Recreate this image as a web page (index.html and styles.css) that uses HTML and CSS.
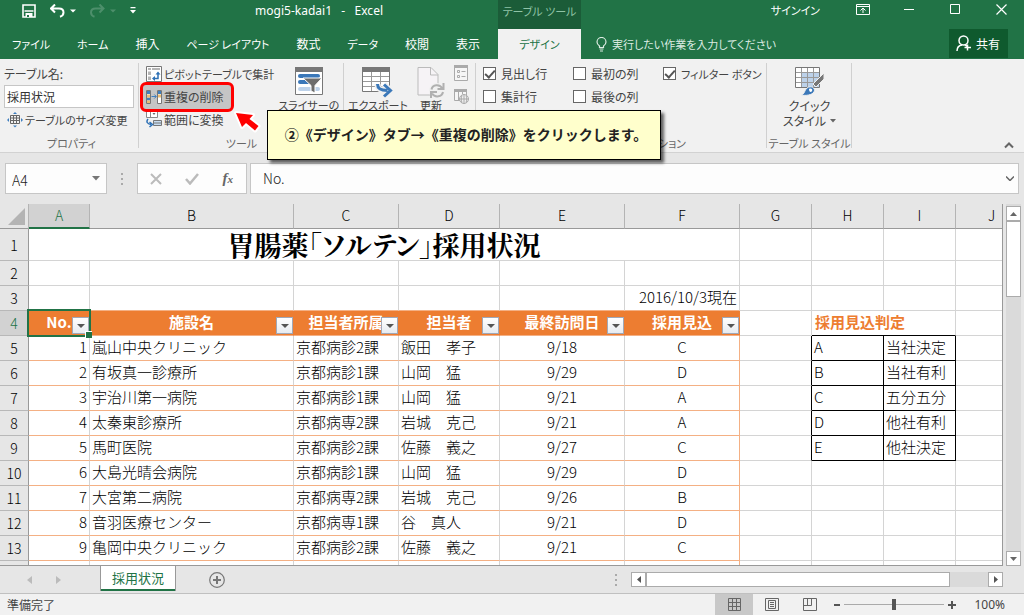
FILE: index.html
```html
<!DOCTYPE html>
<html lang="ja">
<head>
<meta charset="utf-8">
<title>mogi5-kadai1 - Excel</title>
<link rel="stylesheet" href="styles.css">
</head>
<body>
<div class="app">
  <header class="top">
    <div class="titlebar">
      <button class="qat" aria-label="上書き保存"><svg width="14" height="14" viewBox="0 0 14 14"><path d="M1 1h12v12H1z" fill="none" stroke="#fff" stroke-width="1.6"/><path d="M2.500 7h9" stroke="#fff" stroke-width="1.500"/><path d="M3.500 9h7v4h-7z" fill="#fff"/><path d="M5 11h2v2H5z" fill="#217346"/></svg></button>
      <button class="qat" aria-label="元に戻す"><svg width="26" height="14" viewBox="0 0 26 14"><path d="M5 0.500 1 4.500l4 4M1.500 4.500H9c3 0 4.500 1.500 4.500 4 0 2-1.300 3.500-3.500 4.300" fill="none" stroke="#fff" stroke-width="2"/><path d="M20 5.500h6l-3 3z" fill="#fff"/></svg></button>
      <button class="qat dim" aria-label="やり直し"><svg width="26" height="14" viewBox="0 0 26 14"><path d="M9.500 0.500l4 4-4 4M13 4.500H5.500C2.500 4.500 1 6 1 8.500c0 2 1.300 3.500 3.500 4.300" fill="none" stroke="#4d8f6b" stroke-width="2"/><path d="M20 5.500h6l-3 3z" fill="#4d8f6b"/></svg></button>
      <button class="qat" aria-label="カスタマイズ"><svg width="6" height="7" viewBox="0 0 6 7"><path d="M0.500 0h5v1.300h-5zM0 3h6L3 6.500z" fill="#fff"/></svg></button>
      <h1 class="doc">mogi5-kadai1&nbsp;&nbsp; -&nbsp;&nbsp; Excel</h1>
    </div>
    <div class="context">テーブル ツール</div>
    <div class="winbar">
      <button class="signin">サインイン</button>
      <button class="win" aria-label="リボンの表示オプション"><svg width="14" height="11" viewBox="0 0 14 11"><path d="M.5.5h13v10H.5zM.5 2.500h13M7 9V4.500M4.500 6.500 7 4l2.500 2.500" fill="none" stroke="#fff"/></svg></button>
      <button class="win" aria-label="最小化"><svg width="10" height="11" viewBox="0 0 10 11"><path d="M0 5.500h10" stroke="#fff"/></svg></button>
      <button class="win" aria-label="最大化"><svg width="10" height="11" viewBox="0 0 10 11"><path d="M.5.5h9v9h-9z" fill="none" stroke="#fff"/></svg></button>
      <button class="win" aria-label="閉じる"><svg width="11" height="11" viewBox="0 0 11 11"><path d="M.5.5l10 10M10.500.5l-10 10" stroke="#fff" stroke-width="1.200"/></svg></button>
    </div>
    <nav class="tabs">
      <a class="small" href="#">ファイル</a><a class="small" href="#">ホーム</a><a href="#">挿入</a><a class="small" href="#">ページ レイアウト</a><a href="#">数式</a><a class="small" href="#">データ</a><a href="#">校閲</a><a href="#">表示</a>
    </nav>
    <a class="tab-on small" href="#">デザイン</a>
    <div class="tellme">
      <svg width="11" height="15" viewBox="0 0 11 15"><path d="M3.500 10.500V9C2 8 1 6.800 1 5a4.500 4.500 0 0 1 9 0c0 1.800-1 3-2.500 4v1.500zM3.500 12h4M4 14h3" fill="none" stroke="#dcebe2" stroke-width="1.200"/></svg>
      <button class="ask">実行したい作業を入力してください</button>
      <button class="share"><svg width="16" height="17" viewBox="0 0 16 17"><circle cx="7.500" cy="5.500" r="4.500" fill="none" stroke="#fff" stroke-width="1.500"/><path d="M1 16c0-3.500 1.700-5.500 5-6M9 10l2 1M11.500 9.500v6M8.500 12.500h6.500" fill="none" stroke="#fff" stroke-width="1.500"/></svg>共有</button>
    </div>
  </header>

  <section class="ribbon">
    <div class="group g-prop">
      <div class="rows">
        <label class="cap" for="tname">テーブル名:</label>
        <input class="tname" id="tname" value="採用状況">
        <button class="cmd small"><svg width="16" height="16" viewBox="0 0 16 16"><path d="M3.500 3.500h9v8h-9zM3.500 6h9M3.500 8.500h9M6.500 3.500v8M9.500 3.500v8" fill="none" stroke="#666"/><path d="M6 2l2-2 2 2zM6 13.500l2 2 2-2zM2 6 0 8l2 2zM14 6l2 2-2 2z" fill="#3f7fbf"/></svg>テーブルのサイズ変更</button>
      </div>
      <div class="gname">プロパティ</div>
    </div>
    <div class="group g-tool">
      <div class="body">
        <div class="rows">
          <button class="cmd small"><svg width="16" height="16" viewBox="0 0 16 16"><path d="M.5.5h15v15H.5z" fill="#fff" stroke="#777"/><path d="M2 2h3v2H2zM6 2h8v2H6zM2 5.500h3V9H2zM2 10.500h3V14H2z" fill="#b5b5b5"/><path d="M7.500 12.500H12V7.500" fill="none" stroke="#2d70b5" stroke-width="1.500"/><path d="M9 10v5l-3-2.500zM9.500 8.500h5L12 5.500z" fill="#2d70b5"/></svg>ピボットテーブルで集計</button>
          <button class="cmd hot"><svg width="16" height="16" viewBox="0 0 16 16"><path d="M.5 1.500h4v13h-4zM11.500 1.500h4v13h-4z" fill="#fff" stroke="#777"/><path d="M1 2h3v3H1zM1 8.500h3v3H1zM12 2h3v3h-3z" fill="#3f7fbf"/><path d="M1 5.500h3v3H1zM1 11.500h3V14H1zM12 5.500h3v3h-3z" fill="#edbd73"/><path d="M5.500 7.500H10M8.300 5.500l2 2-2 2" fill="none" stroke="#3f7fbf"/></svg>重複の削除</button>
          <button class="cmd"><svg width="16" height="16" viewBox="0 0 16 16"><path d="M.5 0v5.500h11V0M4.500 0v5.500" fill="#fff" stroke="#888"/><path d="M6.500 1h3L8 3z" fill="#666"/><path d="M7.500 8.500h8v5h-8z" fill="#c8ddf1" stroke="#777"/><path d="M8 11h7" stroke="#777"/><path d="M2 7C0 9.500 1 12 5 12.500M3.500 10l3 2.500-3 2.500" fill="none" stroke="#2d70b5" stroke-width="1.500"/></svg>範囲に変換</button>
        </div>
        <button class="big"><svg width="28" height="28" viewBox="0 0 28 28"><path d="M.5.5h27v27H.5z" fill="#fff" stroke="#777"/><path d="M0 0h28v5H0z" fill="#777"/><rect x="3" y="7" width="22" height="4" rx="2" fill="#3b78b9"/><rect x="3" y="13" width="16" height="4" rx="2" fill="#3b78b9"/><rect x="3" y="20" width="22" height="4" rx="2" fill="#bdd2ea"/><path d="M8 11h19l-7 7.500V26l-4-2v-5.500z" fill="#6d6d6d" stroke="#fff"/></svg>スライサーの</button>
      </div>
      <div class="gname">ツール</div>
    </div>
    <div class="group g-ext">
      <div class="body">
        <button class="big"><svg width="31" height="31" viewBox="0 0 31 31"><path d="M.5.5h27v24H.5z" fill="#fff" stroke="#777"/><path d="M0 0h28v5H0z" fill="#777"/><path d="M1 9.500h26M1 14.500h26M1 19.500h26M9.500 5v19M18.500 5v19" stroke="#999"/><path d="M15.500 17c0 5 3 6.500 10 6.500M22 17.500l6.500 6-6.500 6" fill="none" stroke="#f0f0f0" stroke-width="6"/><path d="M15.500 17c0 5 3 6.500 10 6.500M22 17.500l6.500 6-6.500 6" fill="none" stroke="#3b78b9" stroke-width="3"/></svg>エクスポート</button>
        <button class="big"><svg width="28" height="31" viewBox="0 0 28 31"><path d="M1 .5h13l7 7v20.500H1z" fill="#f6f3f6" stroke="#bbb"/><path d="M13.500.5v7.500H21" fill="none" stroke="#bbb"/><circle cx="20" cy="24" r="8" fill="#f0f0f0"/><path d="M14.500 22.500c1-5 8-6 11-1M26.500 16v6h-6M26 25c-1 5-8 6-11 1.500M14 31v-6h6" fill="none" stroke="#b0b0b0" stroke-width="2"/></svg>更新</button>
        <div class="mini">
          <button class="mi" aria-label="プロパティ"><svg width="14" height="16" viewBox="0 0 14 16"><path d="M.5.5h13v15H.5z" fill="#f6f6f6" stroke="#aaa"/><path d="M0 0h14v3H0z" fill="#aaa"/><path d="M3.500 5.500h2v2h-2zM3.500 10.500h2v2h-2zM7.500 6.500h4M7.500 11.500h4" fill="none" stroke="#aaa"/></svg></button>
          <button class="mi" aria-label="ブラウザーで開く"><svg width="15" height="15" viewBox="0 0 15 15"><path d="M.5 1.500h12v10H.5zM4.500 1v10M8.500 1v4" fill="#f6f6f6" stroke="#aaa"/><path d="M0 0h13v3H0z" fill="#aaa"/><circle cx="10" cy="10" r="4.500" fill="#f0f0f0" stroke="#aaa"/><path d="M5.500 10h9M10 5.500v9M8 6.500c-1 2-1 5 0 7M12 6.500c1 2 1 5 0 7" fill="none" stroke="#aaa"/></svg></button>
        </div>
      </div>
    </div>
    <div class="group g-opt">
      <div class="checks">
        <label><input type="checkbox" checked>見出し行</label>
        <label><input type="checkbox">最初の列</label>
        <label class="small"><input type="checkbox" checked>フィルター ボタン</label>
        <label><input type="checkbox">集計行</label>
        <label><input type="checkbox">最後の列</label>
      </div>
      <div class="gname">テーブル スタイルのオプション</div>
    </div>
    <div class="group g-sty">
      <div class="body">
        <button class="big"><svg width="30" height="29" viewBox="0 0 30 29"><path d="M.5.5h24v20H.5z" fill="#fff" stroke="#777"/><path d="M7 6h17v14H7z" fill="#bdd2ea"/><path d="M1 5.500h23M1 10.500h23M1 15.500h23M6.500 1v19M12.500 1v19M18.500 1v19" stroke="#999"/><path d="M29 6v6l-8 8-3-3z" fill="#777" stroke="#f0f0f0"/><path d="M6 28c4-1 3-4 6-7 4-3 9 0 7 4-2 3-8 4-13 3z" fill="#3b78b9" stroke="#f0f0f0"/><path d="M14 22c2-1 4 0 3 2s-3 1-3-2z" fill="#fff"/></svg>クイック<br>スタイル<svg class="caret" width="6" height="4" viewBox="0 0 6 4"><path d="M0 0h6L3 3.500z" fill="#666"/></svg></button>
      </div>
      <div class="gname">テーブル スタイル</div>
    </div>
    <button class="fold" aria-label="リボンを折りたたむ"><svg width="10" height="7" viewBox="0 0 10 7"><path d="M1 5.500l4-4 4 4" fill="none" stroke="#666" stroke-width="2"/></svg></button>
  </section>

  <section class="fbar">
    <div class="namebox"><input aria-label="名前ボックス" value="A4"><svg width="8" height="5" viewBox="0 0 8 5"><path d="M0 0h8L4 4.500z" fill="#777"/></svg></div>
    <div class="grip"><i></i><i></i><i></i></div>
    <div class="fbtns">
      <button aria-label="キャンセル"><svg width="12" height="12" viewBox="0 0 12 12"><path d="M1 1l10 10M11 1 1 11" stroke="#bbb" stroke-width="2"/></svg></button>
      <button aria-label="入力"><svg width="14" height="12" viewBox="0 0 14 12"><path d="M1 6l4 4.500L13 1" fill="none" stroke="#bbb" stroke-width="2.500"/></svg></button>
      <button class="fx" aria-label="関数の挿入">f<small>x</small></button>
    </div>
    <div class="formula"><input aria-label="数式バー" value="No."><svg width="8" height="5" viewBox="0 0 8 5"><path d="M0 .5l4 4 4-4" fill="none" stroke="#666" stroke-width="1.500"/></svg></div>
  </section>

  <main class="work">
    <div class="sheet">
      <table>
        <colgroup><col class="w0"><col class="wa"><col class="wb"><col class="wc"><col class="wd"><col class="we"><col class="wf"><col class="wg"><col class="wg"><col class="wg"><col class="wg"></colgroup>
        <thead><tr><th class="corner"><svg width="17" height="17" viewBox="0 0 17 17"><path d="M17 0v17H0z" fill="#b4b4b4"/></svg></th><th class="sel">A</th><th>B</th><th>C</th><th>D</th><th>E</th><th>F</th><th>G</th><th>H</th><th>I</th><th>J</th></tr></thead>
        <tbody>
          <tr class="r1"><th>1</th><td class="heading" colspan="6">胃腸薬「ソルテン」採用状況</td><td></td><td></td><td></td><td></td></tr>
          <tr><th>2</th><td></td><td></td><td></td><td></td><td></td><td></td><td></td><td></td><td></td><td></td></tr>
          <tr class="r3"><th>3</th><td></td><td></td><td></td><td></td><td></td><td class="num">2016/10/3現在</td><td></td><td></td><td></td><td></td></tr>
          <tr class="r4"><th class="sel">4</th><td class="h cur">No.<button aria-label="No.を絞り込む"></button></td><td class="h">施設名<button aria-label="施設名を絞り込む"></button></td><td class="h">担当者所属<button aria-label="担当者所属を絞り込む"></button></td><td class="h">担当者<button aria-label="担当者を絞り込む"></button></td><td class="h">最終訪問日<button aria-label="最終訪問日を絞り込む"></button></td><td class="h">採用見込<button aria-label="採用見込を絞り込む"></button></td><td></td><td class="judge" colspan="2">採用見込判定</td><td></td></tr>
          <tr class="d k"><th>5</th><td>1</td><td>嵐山中央クリニック</td><td>京都病診2課</td><td>飯田　孝子</td><td>9/18</td><td>C</td><td></td><td>A</td><td>当社決定</td><td></td></tr>
          <tr class="d k"><th>6</th><td>2</td><td>有坂真一診療所</td><td>京都病診1課</td><td>山岡　猛</td><td>9/29</td><td>D</td><td></td><td>B</td><td>当社有利</td><td></td></tr>
          <tr class="d k"><th>7</th><td>3</td><td>宇治川第一病院</td><td>京都病診1課</td><td>山岡　猛</td><td>9/21</td><td>A</td><td></td><td>C</td><td>五分五分</td><td></td></tr>
          <tr class="d k"><th>8</th><td>4</td><td>太秦東診療所</td><td>京都病専2課</td><td>岩城　克己</td><td>9/21</td><td>A</td><td></td><td>D</td><td>他社有利</td><td></td></tr>
          <tr class="d k"><th>9</th><td>5</td><td>馬町医院</td><td>京都病診2課</td><td>佐藤　義之</td><td>9/27</td><td>C</td><td></td><td>E</td><td>他社決定</td><td></td></tr>
          <tr class="d"><th>10</th><td>6</td><td>大島光晴会病院</td><td>京都病診1課</td><td>山岡　猛</td><td>9/29</td><td>D</td><td></td><td></td><td></td><td></td></tr>
          <tr class="d"><th>11</th><td>7</td><td>大宮第二病院</td><td>京都病専2課</td><td>岩城　克己</td><td>9/26</td><td>B</td><td></td><td></td><td></td><td></td></tr>
          <tr class="d"><th>12</th><td>8</td><td>音羽医療センター</td><td>京都病専1課</td><td>谷　真人</td><td>9/21</td><td>D</td><td></td><td></td><td></td><td></td></tr>
          <tr class="d"><th>13</th><td>9</td><td>亀岡中央クリニック</td><td>京都病診2課</td><td>佐藤　義之</td><td>9/21</td><td>C</td><td></td><td></td><td></td><td></td></tr>
          <tr class="d"><th></th><td></td><td></td><td></td><td></td><td></td><td></td><td></td><td></td><td></td><td></td></tr>
        </tbody>
      </table>
    </div>
    <div class="vscroll">
      <button aria-label="上へ"><svg width="7" height="4" viewBox="0 0 7 4"><path d="M0 4h7L3.500 0z" fill="#666"/></svg></button>
      <div class="vthumb"></div>
      <button class="end" aria-label="下へ"><svg width="7" height="4" viewBox="0 0 7 4"><path d="M0 0h7L3.500 4z" fill="#666"/></svg></button>
    </div>
  </main>

  <div class="sheets">
    <div class="nav">
      <button aria-label="前のシート"><svg width="5" height="8" viewBox="0 0 5 8"><path d="M5 0v8L0 4z" fill="#bbb"/></svg></button>
      <button aria-label="次のシート"><svg width="5" height="8" viewBox="0 0 5 8"><path d="M0 0v8l5-4z" fill="#bbb"/></svg></button>
    </div>
    <a class="stab" href="#">採用状況</a>
    <button class="add" aria-label="新しいシート"><svg width="16" height="16" viewBox="0 0 16 16"><circle cx="8" cy="8" r="7.300" fill="none" stroke="#777" stroke-width="1.200"/><path d="M8 4v8M4 8h8" stroke="#777" stroke-width="2"/></svg></button>
    <div class="grip"><i></i><i></i><i></i></div>
    <div class="hscroll">
      <button aria-label="左へ"><svg width="4" height="7" viewBox="0 0 4 7"><path d="M4 0v7L0 3.500z" fill="#555"/></svg></button>
      <div class="hthumb"></div>
      <button class="end" aria-label="右へ"><svg width="4" height="7" viewBox="0 0 4 7"><path d="M0 0v7l4-3.500z" fill="#555"/></svg></button>
    </div>
  </div>

  <footer class="status">
    <span class="ready">準備完了</span>
    <button class="view on" aria-label="標準"><svg width="13" height="13" viewBox="0 0 13 13"><path d="M.5.5h12v12H.5zM.5 4.500h12M.5 8.500h12M4.500.5v12M8.500.5v12" fill="none" stroke="#666"/></svg></button>
    <button class="view" aria-label="ページ レイアウト表示"><svg width="14" height="13" viewBox="0 0 14 13"><path d="M.5.5h13v12H.5zM3.500 2.500h7v8h-7zM5 4.500h4M5 6.500h4M5 8.500h4" fill="none" stroke="#666"/></svg></button>
    <button class="view" aria-label="改ページ プレビュー"><svg width="14" height="13" viewBox="0 0 14 13"><path d="M.5.5h13v12H.5zM.5 7.500h8V.5M4.500.5v7" fill="none" stroke="#666"/></svg></button>
    <button class="zb" aria-label="縮小"><svg width="6" height="8" viewBox="0 0 6 8"><path d="M0 4h6" stroke="#555" stroke-width="2"/></svg></button>
    <input class="zoom" type="range" aria-label="ズーム" value="50">
    <button class="zb" aria-label="拡大"><svg width="8" height="8" viewBox="0 0 8 8"><path d="M0 4h8M4 0v8" stroke="#555" stroke-width="2"/></svg></button>
    <button class="pct">100%</button>
  </footer>

  <svg class="pointer" width="24" height="19" viewBox="0 0 24 19"><path d="M1 1l17 2-3.500 4 9 7-3.500 4.500-9-7.500L7 15z" fill="#f00" stroke="#fff" stroke-width="4" stroke-linejoin="round" paint-order="stroke"/></svg>
  <div class="callout">②《デザイン》タブ→《重複の削除》をクリックします。</div>
</div>
</body>
</html>
```

FILE: styles.css
```css
* { box-sizing: border-box; }
body {
  margin: 0;
  font-family: "Noto Sans CJK JP", sans-serif;
  font-size: 12px;
  line-height: 16px;
  color: #444;
  font-feature-settings: "palt";
}
button, input {
  font: inherit;
  font-feature-settings: inherit;
  color: inherit;
  background: none;
  border: 0;
  padding: 0;
  margin: 0;
  min-width: 0;
}
a { color: inherit; text-decoration: none; }
svg { flex: none; display: block; }
.app {
  position: relative;
  display: flex;
  flex-direction: column;
  height: 100vh;
  background: #e6e6e6;
  overflow: hidden;
}
.small, .big, .gname, .ask, .signin, .context { font-size: 11px; }

/* title bar and tabs */
.top {
  flex: none;
  display: grid;
  grid-template-columns: 498px 83px 1fr;
  grid-template-rows: 29px 30px;
  background: #217346;
  color: #fff;
}
.titlebar { display: flex; align-items: center; gap: 14px; padding: 0 115px 8px 22px; }
.qat { height: 16px; }
.doc {
  margin: 0 0 0 auto;
  font: 12px/16px "Noto Sans", "Noto Sans CJK JP", sans-serif;
}
.context {
  display: flex;
  justify-content: center;
  padding-top: 3px;
  background: #1b5c38;
  color: #8fc3a6;
}
.winbar { display: flex; align-items: center; justify-content: flex-end; padding-bottom: 10px; }
.signin { margin-right: 20px; }
.win { width: 46px; height: 18px; display: flex; align-items: center; justify-content: center; }
.tabs { display: flex; justify-content: space-between; align-items: center; padding: 0 18px 0 12px; }
.tab-on {
  display: flex;
  align-items: center;
  justify-content: center;
  background: #f1f1f1;
  color: #217346;
}
.tellme { display: flex; align-items: center; gap: 5px; padding: 0 16px 0 15px; color: #dcebe2; }
.share {
  margin-left: auto;
  align-self: flex-start;
  display: flex;
  align-items: center;
  gap: 4px;
  height: 29px;
  padding: 0 8px 0 7px;
  background: #0f5a2e;
  color: #fff;
}

/* ribbon */
.ribbon {
  flex: none;
  display: flex;
  height: 94px;
  padding: 3px 0 1px;
  background: #f1f1f1;
  border-bottom: 1px solid #d2d2d2;
}
.group { display: flex; flex-direction: column; justify-content: space-between; position: relative; flex: none; }
.group::after {
  content: "";
  position: absolute;
  right: 0;
  top: 1px;
  bottom: 3px;
  border-right: 1px solid #d0d0d0;
}
.g-prop { width: 139px; padding-left: 4px; }
.g-tool { width: 205px; }
.g-ext { width: 132px; }
.g-opt { width: 291px; }
.g-opt .gname { padding-right: 12px; }
.g-sty { width: 85px; }
.gname { text-align: center; color: #666; white-space: nowrap; }
.rows { display: grid; grid-template-rows: repeat(3, 23px); align-items: center; justify-items: start; }
.cap, .cmd { white-space: nowrap; }
.tname { width: 130px; height: 23px; border: 1px solid #c6c6c6; background: #fff; padding: 0 2px; color: #333; }
.cmd { display: flex; align-items: center; gap: 2px; padding: 0 3px; height: 22px; }
.g-tool .cmd { padding: 0 0 0 7px; }
.g-tool .cmd.hot {
  position: relative;
  z-index: 1;
  height: 30px;
  margin-left: 1px;
  padding: 0 7px 0 3px;
  border: 3px solid #f00;
  border-radius: 6px;
  background: #c5c5c5;
}
.body { display: flex; align-items: flex-start; height: 69px; }
.g-tool .body { gap: 4px; }
.big {
  flex: none;
  display: block;
  padding-top: 5px;
  text-align: center;
  line-height: 15px;
}
.big > svg:first-child { margin: 0 auto 3px; }
.g-ext .body { padding-left: 4px; gap: 9px; }
.g-ext .big > svg:first-child { margin-bottom: 0; }
.mini { display: grid; gap: 7px; align-content: start; padding-top: 3px; }
.mi { height: 16px; }
.g-sty .body { justify-content: center; }
.g-sty .big { font-size: 12px; }
.g-sty .big > svg:first-child { margin-bottom: 2px; }
.caret { display: inline-block; margin: 0 0 3px 4px; }
.checks { display: grid; grid-template-columns: 90px 90px 1fr; grid-auto-rows: 23px; padding-left: 7px; }
.checks label { display: flex; align-items: center; gap: 5px; white-space: nowrap; }
.checks input {
  appearance: none;
  width: 13px;
  height: 13px;
  border: 1px solid #666;
  background: #fff;
  display: grid;
  place-items: center;
}
.checks input:checked::after {
  content: "";
  width: 4px;
  height: 8px;
  border: solid #555;
  border-width: 0 2px 2px 0;
  transform: rotate(42deg);
  margin-bottom: 2px;
}
.fold { margin: auto 10px 2px auto; }

/* formula bar */
.fbar { flex: none; display: flex; height: 51px; padding: 10px 5px 10px; }
.namebox, .fbtns, .formula { display: flex; align-items: center; background: #fdfdfd; border: 1px solid #c6c6c6; }
.namebox { width: 102px; padding: 0 6px; }
.namebox input, .formula input { flex: 1; width: 0; font-size: 14px; line-height: 20px; font-weight: 300; color: #222; }
.namebox input { padding-top: 2px; }
.formula input { padding-bottom: 2px; }
.grip { display: grid; gap: 3px; align-content: center; justify-content: center; width: 30px; }
.grip i { width: 2px; height: 2px; background: #aaa; }
.fbtns { width: 110px; justify-content: space-between; padding: 0 13px 0 12px; }
.fx { font: italic bold 15px/18px "Liberation Serif", serif; color: #666; }
.fx small { font-size: 11px; }
.formula { flex: 1; margin-left: 3px; padding: 0 4px 0 12px; }

/* worksheet */
.work { flex: 1; min-height: 0; display: flex; }
.sheet {
  flex: 1;
  min-width: 0;
  overflow: hidden;
  border-right: 1px solid #999;
  border-bottom: 1px solid #999;
}
.sheet table {
  table-layout: fixed;
  width: 1028px;
  border-collapse: separate;
  border-spacing: 0;
  background: #fff;
  font-size: 15px;
  line-height: 20px;
  font-weight: 300;
  color: #000;
  font-feature-settings: normal;
}
.w0 { width: 29px; }
.wa { width: 61px; }
.wb { width: 204px; }
.wc { width: 105px; }
.wd { width: 101px; }
.we { width: 125px; }
.wf { width: 115px; }
.wg { width: 72px; }
.sheet th { padding: 0; background: #e6e6e6; font-weight: 300; font-size: 14px; color: #000; border-right: 1px solid #999; border-bottom: 1px solid #b8b8b8; }
.sheet thead th { height: 25px; padding-bottom: 2px; border-right-color: #b4b4b4; border-bottom-color: #999; }
.sheet thead .sel { border-bottom: 2px solid #217346; }
.sheet .sel { background: #d2d2d2; color: #217346; }
.corner svg { margin: 2px 0 0 8px; }
.sheet td { height: 25px; padding: 0 2px 2px; white-space: nowrap; border-right: 1px solid #d4d4d4; border-bottom: 1px solid #d4d4d4; }
.sheet .r1 td { height: 32px; padding-bottom: 0; }
.sheet .heading {
  text-align: center;
  font-family: "Noto Serif CJK JP", "Noto Sans CJK JP", serif;
  font-size: 27px;
  line-height: 28px;
  font-weight: 700;
  font-feature-settings: "palt";
}
.num { text-align: right; }
.r3 td:nth-child(-n+7) { border-bottom-color: #f4b084; }
.sheet .h { position: relative; background: #ed7d31; color: #fff; font-weight: 700; text-align: center; border-color: #f4b084; border-right-color: #ed7d31; }
.h button {
  position: absolute;
  right: 0;
  bottom: 1px;
  width: 17px;
  height: 17px;
  border: 1px solid #a0a8b8;
  background: linear-gradient(#fff, #e8ebf0);
  display: grid;
  place-items: center;
}
.h button::after { content: ""; border: solid transparent; border-width: 4px 4px 0; border-top-color: #555; }
.cur::before {
  content: "";
  position: absolute;
  inset: -2px;
  border: 2px solid #217346;
  z-index: 1;
}
.cur::after {
  content: "";
  position: absolute;
  right: -3px;
  bottom: -3px;
  width: 6px;
  height: 6px;
  background: #217346;
  border: solid #fff;
  border-width: 1px 0 0 1px;
  z-index: 2;
}
.sheet .judge { color: #ed7d31; font-weight: 700; padding-left: 3px; border-bottom-color: #000; }
.d td:nth-child(-n+7) { border-bottom-color: #f4b084; }
.d td:nth-child(2) { text-align: right; }
.d td:nth-child(6), .d td:nth-child(7) { text-align: center; }
.d td:nth-child(7) { border-right-color: #f4b084; }
.k td:nth-child(8) { border-right-color: #000; }
.k td:nth-child(9), .k td:nth-child(10) { border-color: #000; }

.vscroll {
  flex: none;
  width: 21px;
  padding: 2px 3px 0;
  display: flex;
  flex-direction: column;
  background: linear-gradient(#dadada, #dadada) center / 15px 100% no-repeat;
}
.vscroll button, .hscroll button {
  flex: none;
  width: 15px;
  height: 15px;
  display: grid;
  place-items: center;
  background: #fff;
  border: 1px solid #ababab;
}
.vthumb { height: 76px; width: 15px; background: #fff; border: 1px solid #ababab; }
.vscroll .end { margin-top: auto; }

/* sheet tabs */
.sheets { flex: none; display: flex; align-items: center; height: 28px; padding-right: 21px; border-bottom: 1px solid #c0c0c0; }
.nav { width: 100px; display: flex; gap: 24px; padding-left: 27px; }
.stab {
  align-self: flex-start;
  width: 76px;
  height: 25px;
  display: grid;
  place-items: center;
  padding-bottom: 2px;
  background: #fff;
  border: solid #999;
  border-width: 0 1px;
  box-shadow: inset 0 -2px #217346;
  color: #217346;
  font-size: 13px;
}
.add { margin-left: 33px; }
.sheets .grip { margin-left: auto; }
.hscroll { width: 372px; display: flex; background: #dadada; }
.hthumb { flex: 0 1 304px; height: 15px; background: #fff; border: 1px solid #ababab; }
.hscroll .end { margin-left: auto; }

/* status bar */
.status { flex: none; display: flex; align-items: center; height: 21px; padding-right: 19px; background: #f1f1f1; }
.ready { margin-right: auto; padding-left: 7px; }
.view { width: 38px; height: 21px; display: grid; place-items: center; }
.view.on { background: #c8c8c8; }
.zb { margin: 0 4px; }
.view + .zb { margin-left: 5px; }
.zoom { appearance: none; width: 100px; height: 12px; background: linear-gradient(#aaa, #aaa) center / 100% 1px no-repeat; }
.zoom::-webkit-slider-thumb { appearance: none; width: 4px; height: 11px; background: #555; }
.pct { margin-left: 14px; font-family: "Noto Sans", sans-serif; }

/* guidance overlay */
.pointer { position: absolute; left: 235px; top: 112px; overflow: visible; }
.callout {
  position: absolute;
  left: 267px;
  top: 110px;
  width: 394px;
  height: 50px;
  display: grid;
  place-items: center;
  padding: 0 0 2px 4px;
  background: #ffffcc;
  border: 1px solid #000;
  box-shadow: 3px 3px 3px rgba(0, 0, 0, .6);
  color: #222;
  font-size: 14px;
  font-weight: 700;
  font-feature-settings: normal;
  white-space: nowrap;
}
```
